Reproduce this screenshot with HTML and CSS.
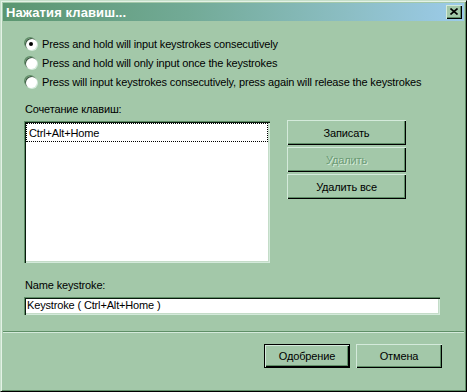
FILE: index.html
```html
<!DOCTYPE html>
<html lang="ru">
<head>
    <meta charset="UTF-8">
    <title>Нажатия клавиш...</title>
    <link rel="stylesheet" href="styles.css">
</head>
<body>
    <div class="window">
        <div class="titlebar">
            <span class="title">Нажатия клавиш...</span>
            <button class="close-btn" aria-label="Close">
                <svg width="8" height="7" viewBox="0 0 8 7">
                    <path d="M0.5 0.5 L7.5 6.5 M7.5 0.5 L0.5 6.5" stroke="#000" stroke-width="1.6" fill="none"/>
                </svg>
            </button>
        </div>

        <div class="content">
            <div class="options">
                <label class="option"><span class="radio checked"></span>Press and hold will input keystrokes consecutively</label>
                <label class="option"><span class="radio"></span>Press and hold will only input once the keystrokes</label>
                <label class="option"><span class="radio"></span>Press will input keystrokes consecutively, press again will release the keystrokes</label>
            </div>

            <div class="field-label">Сочетание клавиш:</div>
            <div class="keys-row">
                <div class="listbox">
                    <div class="list-item">Ctrl+Alt+Home</div>
                </div>
                <div class="btn-column">
                    <button class="btn wide">Записать</button>
                    <button class="btn wide disabled">Удалить</button>
                    <button class="btn wide">Удалить все</button>
                </div>
            </div>

            <div class="field-label name-label">Name keystroke:</div>
            <div class="textbox">Keystroke ( Ctrl+Alt+Home )</div>
        </div>

        <div class="separator"></div>

        <div class="footer">
            <button class="btn default">Одобрение</button>
            <button class="btn">Отмена</button>
        </div>
    </div>
</body>
</html>
```

FILE: styles.css
```css
:root {
    --face: #a3c8a9;
    --light: #d4eadb;
    --shadow: #5f8f67;
    --dark: #000;
}

body {
    margin: 0;
    padding: 0;
    background: var(--face);
    font-family: "Liberation Sans", Arial, sans-serif;
    font-size: 11px;
    letter-spacing: -0.15px;
    color: #000;
}

.window {
    width: 467px;
    height: 392px;
    box-sizing: border-box;
    background: var(--face);
    border-top: 1px solid #c6dfca;
    border-left: 1px solid #c6dfca;
    border-right: 1px solid var(--dark);
    border-bottom: 1px solid var(--dark);
    box-shadow: inset 1px 1px 0 #e4f2e6, inset -1px -1px 0 var(--shadow);
    padding: 2px;
    display: flex;
    flex-direction: column;
}

.titlebar {
    height: 18px;
    display: flex;
    align-items: center;
    justify-content: space-between;
    padding-left: 3px;
    padding-right: 2px;
    background: linear-gradient(to right, #5b9670, #72aa96 40%, #8cbec4 75%, #9ccbea);
}

.title {
    font-family: "Liberation Sans", Arial, sans-serif;
    font-weight: bold;
    font-size: 13px;
    letter-spacing: 0.1px;
    color: #fff;
}

.close-btn {
    width: 16px;
    height: 14px;
    padding: 0;
    border: none;
    background: var(--face);
    box-shadow: inset 1px 1px 0 var(--light), inset -1px -1px 0 var(--dark), inset -2px -2px 0 var(--shadow);
    display: flex;
    align-items: center;
    justify-content: center;
}

.close-btn svg {
    display: block;
    margin: 0 1px 1px 0;
}

.content {
    padding: 13px 24px 0 21px;
}

.option {
    display: flex;
    align-items: center;
    height: 19px;
    white-space: nowrap;
}

.radio {
    width: 12px;
    height: 12px;
    margin: 0 5px 0 1px;
    border-radius: 50%;
    background: #fff;
    box-sizing: border-box;
    box-shadow: -1px -1px 0 var(--shadow), 1px 1px 0 var(--light), inset 1px 1px 0 #3a5a40;
    position: relative;
    flex: none;
}

.radio.checked::after {
    content: "";
    position: absolute;
    left: 4px;
    top: 4px;
    width: 4px;
    height: 4px;
    border-radius: 50%;
    background: #000;
}

.field-label {
    line-height: 13px;
    margin: 12px 0 5px 1px;
}

.name-label {
    margin-top: 16px;
}

.keys-row {
    display: flex;
    align-items: flex-start;
    gap: 17px;
}

.listbox {
    width: 246px;
    height: 142px;
    box-sizing: border-box;
    background: #fff;
    padding: 2px;
    box-shadow: inset 1px 1px 0 var(--shadow), inset 2px 2px 0 #0a1a0e, inset -1px -1px 0 var(--light), inset -2px -2px 0 #c4dcc8;
}

.list-item {
    height: 19px;
    line-height: 18px;
    padding-left: 2px;
    box-sizing: border-box;
    border: 1px dotted #000;
}

.btn-column {
    display: flex;
    flex-direction: column;
    gap: 2px;
    margin-top: -1px;
}

.btn {
    font-family: inherit;
    font-size: 11px;
    letter-spacing: -0.15px;
    color: #000;
    background: var(--face);
    border: none;
    padding: 0;
    width: 86px;
    height: 24px;
    box-shadow: inset 1px 1px 0 var(--light), inset -1px -1px 0 var(--dark), inset -2px -2px 0 var(--shadow);
}

.btn.wide {
    width: 119px;
    height: 25px;
}

.btn.disabled {
    color: #6b9a74;
    text-shadow: 1px 1px 0 #d6ebd9;
}

.btn.default {
    box-shadow: inset 0 0 0 1px var(--dark), inset 2px 2px 0 var(--light), inset -2px -2px 0 var(--dark), inset -3px -3px 0 var(--shadow);
}

.textbox {
    width: 416px;
    height: 18px;
    box-sizing: border-box;
    background: #fff;
    line-height: 17px;
    padding-left: 3px;
    box-shadow: inset 1px 1px 0 var(--shadow), inset 2px 2px 0 #0a1a0e, inset -1px -1px 0 var(--light), inset -2px -2px 0 #c4dcc8;
}

.separator {
    margin-top: 16px;
    height: 1px;
    background: var(--shadow);
    border-bottom: 1px solid var(--light);
}

.footer {
    display: flex;
    justify-content: flex-end;
    gap: 6px;
    padding: 11px 22px 0 0;
}
```
